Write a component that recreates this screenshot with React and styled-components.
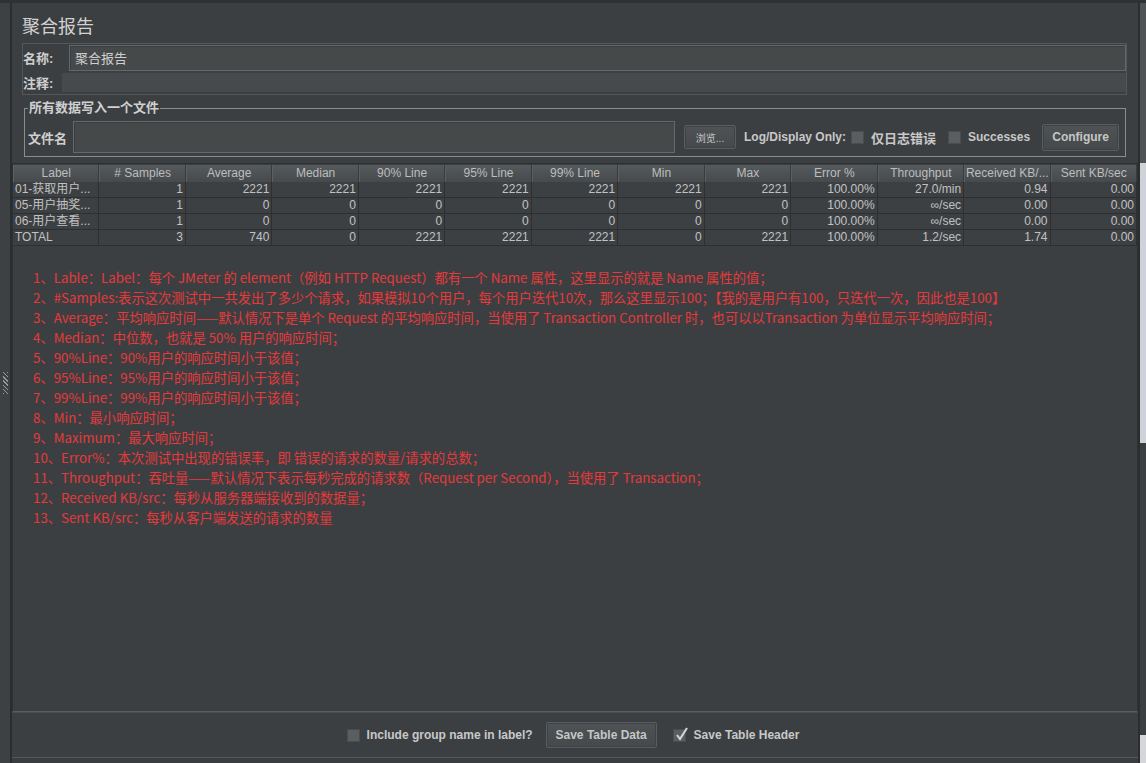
import React from 'react';
import styled, { createGlobalStyle } from 'styled-components';

const Global = createGlobalStyle`
  html, body { margin: 0; padding: 0; background: #3c3f41; overflow: hidden; }
  body {
    font-family: "Liberation Sans", "Noto Sans CJK SC", sans-serif;
    font-size: 12px;
    color: #bbbbbb;
  }
  * { box-sizing: border-box; }
`;

const Frame = styled.div`
  width: 1146px;
  height: 763px;
  display: flex;
  background: #3c3f41;
  border-top: 3px solid #2f3133;
  overflow: hidden;
`;

const LeftStrip = styled.div`
  width: 12px;
  flex: none;
  display: flex;
  align-items: center;
  padding-left: 3px;
  background: #3e4143;
  border-right: 2px solid #2b2d2f;
`;

const Gripper = styled.div`
  width: 5px;
  height: 22px;
  background-image: repeating-linear-gradient(45deg, #9a9a9a 0 1px, #3e4143 1px 3px);
`;

const RightStrip = styled.div`
  width: 8px;
  flex: none;
  display: flex;
  flex-direction: column;
  border-left: 2px solid #2b2d2f;
`;

const StripPart = styled.div`
  height: ${p => p.h}px;
  flex: ${p => (p.grow ? 1 : 'none')};
  background: ${p => p.c};
`;

const Main = styled.div`
  flex: 1;
  min-width: 0;
  display: flex;
  flex-direction: column;
`;

const TitleBar = styled.div`
  height: 40px;
  flex: none;
  display: flex;
  align-items: center;
  padding: 4px 0 0 10px;
  font-size: 18px;
  color: #d2d2d2;
  font-family: "Noto Sans CJK SC", sans-serif;
`;

const NamePanel = styled.div`
  margin: 0 11px 0 10px;
  height: 52px;
  flex: none;
  border: 1px solid #55585a;
  display: flex;
  flex-direction: column;
`;

const FieldRow = styled.div`
  display: flex;
  align-items: center;
  height: ${p => p.h}px;
`;

const FieldLabel = styled.div`
  width: ${p => p.w}px;
  flex: none;
  font-weight: bold;
  font-size: 13px;
  color: #cfcfcf;
  padding-left: ${p => p.pl || 0}px;
  white-space: nowrap;
`;

const TextField = styled.div`
  flex: ${p => (p.w ? 'none' : 1)};
  width: ${p => (p.w ? p.w + 'px' : 'auto')};
  height: ${p => p.h}px;
  background: ${p => p.bg || '#45494a'};
  border: ${p => (p.plain ? 'none' : '1px solid #65686a')};
  box-shadow: ${p => (p.plain ? 'none' : 'inset 1px 1px 0 #3a3d3f')};
  display: flex;
  align-items: center;
  padding-left: 5px;
  font-size: 13px;
  color: #cfcfcf;
  font-family: "Noto Sans CJK SC", sans-serif;
`;

const Group = styled.div`
  margin: 13px 12px 0 12px;
  height: 49px;
  flex: none;
  border: 1px solid #8a8c8e;
  display: flex;
  flex-direction: column;
`;

const GroupTitle = styled.div`
  align-self: flex-start;
  height: 16px;
  margin: -9px 0 0 3px;
  padding: 0 1px;
  background: #3c3f41;
  font-weight: bold;
  font-size: 13px;
  line-height: 16px;
  color: #cfcfcf;
`;

const GroupRow = styled.div`
  display: flex;
  align-items: center;
  margin-top: 5px;
  padding-left: 2px;
`;

const Button = styled.div`
  flex: none;
  width: ${p => p.w}px;
  height: ${p => p.h}px;
  margin-left: ${p => p.ml || 0}px;
  display: flex;
  align-items: center;
  justify-content: center;
  border: 1px solid #5a5d60;
  border-radius: 2px;
  background: linear-gradient(#4f5355, #45494b);
  box-shadow: inset 0 0 0 1px #3f4244;
  font-weight: ${p => (p.small ? 'normal' : 'bold')};
  font-size: ${p => (p.small ? 10 : 12)}px;
  color: #c6c6c6;
  white-space: nowrap;
`;

const Text = styled.span`
  flex: none;
  margin-left: ${p => p.ml || 0}px;
  font-weight: bold;
  font-size: ${p => p.fs || 12}px;
  color: #c8c8c8;
  white-space: nowrap;
`;

const Check = styled.span`
  flex: none;
  width: 13px;
  height: 13px;
  margin-left: ${p => p.ml || 0}px;
  background: #5b5e60;
  border: 1px solid #4a4d4f;
  position: relative;
  display: inline-block;
`;

const CheckMark = styled.svg`
  position: absolute;
  left: 0px;
  top: -4px;
`;

const TablePane = styled.div`
  flex: 1;
  margin-top: 6px;
  border: 1px solid #2e3032;
  border-bottom: 1px solid #5a5d5f;
  padding-top: 1px;
  display: flex;
  flex-direction: column;
`;

const Grid = styled.div`
  display: grid;
  grid-template-columns: repeat(13, 1fr);
  width: 1124px;
`;

const HeadCell = styled.div`
  height: 17px;
  line-height: 17px;
  text-align: center;
  background: linear-gradient(#555a5d, #464a4c);
  border-right: 1px solid #393c3e;
  border-left: 1px solid #5c6063;
  color: #bdbdbd;
  font-size: 12px;
  white-space: nowrap;
  overflow: hidden;
`;

const Cell = styled.div`
  height: 16px;
  line-height: 15px;
  text-align: ${p => (p.left ? 'left' : 'right')};
  padding: 0 2px;
  background: #3d4042;
  border-right: 1px solid #2d3032;
  border-bottom: 1px solid #2d3032;
  color: #c2c2c2;
  font-size: 12px;
  white-space: nowrap;
  overflow: hidden;
`;

const Notes = styled.div`
  padding: 22px 0 0 20px;
  font-family: "Noto Sans CJK SC", sans-serif;
  font-size: 13.3px;
  color: #e5393b;
`;

const NoteLine = styled.div`
  height: 20px;
  line-height: 20px;
  white-space: nowrap;
`;

const BottomBar = styled.div`
  height: 45px;
  flex: none;
  display: flex;
  align-items: center;
  justify-content: center;
  border-top: 1px solid #4a4d4f;
  padding-right: 4px;
`;

const BottomEdge = styled.div`
  height: 6px;
  flex: none;
  border-top: 1px solid #55585a;
  background: #3a3c3e;
`;

const headers = ['Label', '# Samples', 'Average', 'Median', '90% Line', '95% Line', '99% Line', 'Min', 'Max', 'Error %', 'Throughput', 'Received KB/...', 'Sent KB/sec'];

const rows = [
  ['01-获取用户...', '1', '2221', '2221', '2221', '2221', '2221', '2221', '2221', '100.00%', '27.0/min', '0.94', '0.00'],
  ['05-用户抽奖...', '1', '0', '0', '0', '0', '0', '0', '0', '100.00%', '∞/sec', '0.00', '0.00'],
  ['06-用户查看...', '1', '0', '0', '0', '0', '0', '0', '0', '100.00%', '∞/sec', '0.00', '0.00'],
  ['TOTAL', '3', '740', '0', '2221', '2221', '2221', '0', '2221', '100.00%', '1.2/sec', '1.74', '0.00'],
];

const notes = [
  '1、Lable：Label：每个 JMeter 的 element（例如 HTTP Request）都有一个 Name 属性，这里显示的就是 Name 属性的值；',
  '2、#Samples:表示这次测试中一共发出了多少个请求，如果模拟10个用户，每个用户迭代10次，那么这里显示100；【我的是用户有100，只迭代一次，因此也是100】',
  '3、Average：平均响应时间——默认情况下是单个 Request 的平均响应时间，当使用了 Transaction Controller 时，也可以以Transaction 为单位显示平均响应时间；',
  '4、Median：中位数，也就是 50% 用户的响应时间；',
  '5、90%Line：90%用户的响应时间小于该值；',
  '6、95%Line：95%用户的响应时间小于该值；',
  '7、99%Line：99%用户的响应时间小于该值；',
  '8、Min：最小响应时间；',
  '9、Maximum：最大响应时间；',
  '10、Error%：本次测试中出现的错误率，即 错误的请求的数量/请求的总数；',
  '11、Throughput：吞吐量——默认情况下表示每秒完成的请求数（Request per Second），当使用了 Transaction；',
  '12、Received KB/src：每秒从服务器端接收到的数据量；',
  '13、Sent KB/src：每秒从客户端发送的请求的数量',
];

export default function App() {
  return (
    <>
      <Global />
      <Frame>
        <LeftStrip>
          <Gripper />
        </LeftStrip>
        <Main>
          <TitleBar>聚合报告</TitleBar>
          <NamePanel>
            <FieldRow h={27}>
              <FieldLabel w={46}>名称:</FieldLabel>
              <TextField h={26}>聚合报告</TextField>
            </FieldRow>
            <FieldRow h={23}>
              <FieldLabel w={39}>注释:</FieldLabel>
              <TextField h={19} plain bg="#464a4c" />
            </FieldRow>
          </NamePanel>
          <Group>
            <GroupTitle>所有数据写入一个文件</GroupTitle>
            <GroupRow>
              <FieldLabel w={46} pl={1}>文件名</FieldLabel>
              <TextField w={602} h={32} />
              <Button w={52} h={24} ml={9} small>浏览...</Button>
              <Text ml={8}>Log/Display Only:</Text>
              <Check ml={5} />
              <Text ml={7} fs={13}>仅日志错误</Text>
              <Check ml={12} />
              <Text ml={7}>Successes</Text>
              <Button w={77} h={27} ml={12}>Configure</Button>
            </GroupRow>
          </Group>
          <TablePane>
            <Grid>
              {headers.map(h => (
                <HeadCell key={h}>{h}</HeadCell>
              ))}
              {rows.map((r, i) =>
                r.map((c, j) => (
                  <Cell key={i + '-' + j} left={j === 0}>{c}</Cell>
                ))
              )}
            </Grid>
            <Notes>
              {notes.map(n => (
                <NoteLine key={n}>{n}</NoteLine>
              ))}
            </Notes>
          </TablePane>
          <BottomBar>
            <Check />
            <Text ml={7}>Include group name in label?</Text>
            <Button w={111} h={26} ml={13}>Save Table Data</Button>
            <Check ml={16}>
              <CheckMark width="16" height="16" viewBox="0 0 16 16">
                <path d="M3 9 L6 13 L13 2" stroke="#d6d6d6" strokeWidth="2" fill="none" />
              </CheckMark>
            </Check>
            <Text ml={8}>Save Table Header</Text>
          </BottomBar>
          <BottomEdge />
        </Main>
        <RightStrip>
          <StripPart h={160} c="#505355" />
          <StripPart h={280} c="#cfd2d8" />
          <StripPart grow c="#3c3f41" />
          <StripPart h={28} c="#d4d6da" />
        </RightStrip>
      </Frame>
    </>
  );
}
